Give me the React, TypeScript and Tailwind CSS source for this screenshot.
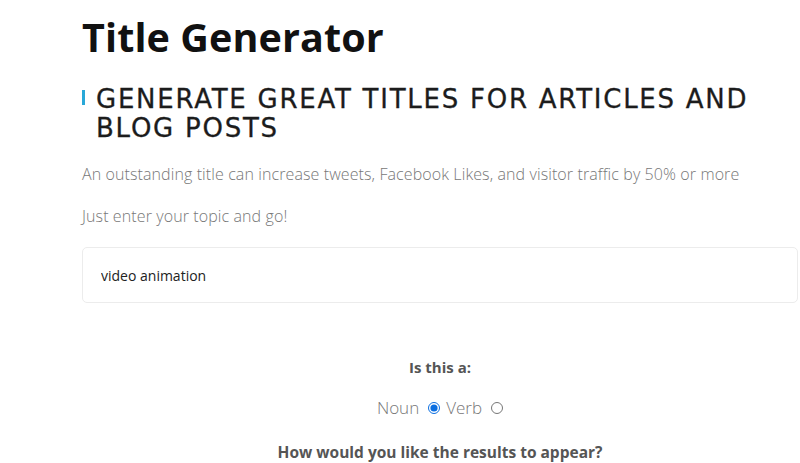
import { useState } from "react";

export default function App() {
  const [topic, setTopic] = useState("video animation");
  const [kind, setKind] = useState("noun");

  return (
    <div
      className="min-h-screen bg-white pl-[82px] pr-[2px]"
      style={{ fontFamily: '"Open Sans", "Liberation Sans", sans-serif' }}
    >
      {/* heading */}
      <h1 className="pt-[14px] text-[39.5px] font-bold leading-[46px] tracking-[0.1px] text-[#111]">
        Title Generator
      </h1>

      <div className="mt-[25px] flex">
        <div className="mr-[11px] mt-[5px] h-[15px] w-[3px] shrink-0 bg-[#29a8d8]" />
        <h2
          className="text-[26px] font-normal uppercase leading-[29px] tracking-[1.75px] text-[#1c1c1c] [-webkit-text-stroke:0.3px_#1c1c1c]"
          style={{ fontFamily: '"DejaVu Sans", sans-serif' }}
        >
          Generate great titles for articles and
          <br />
          blog posts
        </h2>
      </div>

      {/* intro */}
      <p className="mt-[20px] text-[16px] font-light leading-[22px] tracking-[0.1px] text-[#777]">
        An outstanding title can increase tweets, Facebook Likes, and visitor traffic by 50% or more
      </p>
      <p className="mt-[20px] text-[16px] font-light leading-[22px] tracking-[0.1px] text-[#777]">
        Just enter your topic and go!
      </p>

      {/* topic */}
      <input
        value={topic}
        onChange={(e) => setTopic(e.target.value)}
        className="mt-[20px] block h-[56px] w-full rounded-[5px] border border-[#ececec] px-[18px] text-[14px] text-[#222] outline-none"
      />

      {/* options */}
      <div className="mt-[54px] flex flex-col items-center">
        <div className="text-[15px] font-bold leading-[20px] text-[#555]">Is this a:</div>
        <div className="mt-[21px] flex items-center text-[17px] font-light leading-[20px] text-[#777]">
          <label className="flex items-center">
            <span>Noun</span>
            <input
              type="radio"
              name="kind"
              checked={kind === "noun"}
              onChange={() => setKind("noun")}
              className="ml-[9px] h-[12px] w-[12px] accent-[#0b6ee0]"
            />
          </label>
          <label className="ml-[6px] flex items-center">
            <span>Verb</span>
            <input
              type="radio"
              name="kind"
              checked={kind === "verb"}
              onChange={() => setKind("verb")}
              className="ml-[9px] h-[12px] w-[12px] accent-[#0b6ee0]"
            />
          </label>
        </div>
        <div className="mt-[24px] text-[15.5px] font-bold leading-[20px] text-[#555]">
          How would you like the results to appear?
        </div>
      </div>
    </div>
  );
}
